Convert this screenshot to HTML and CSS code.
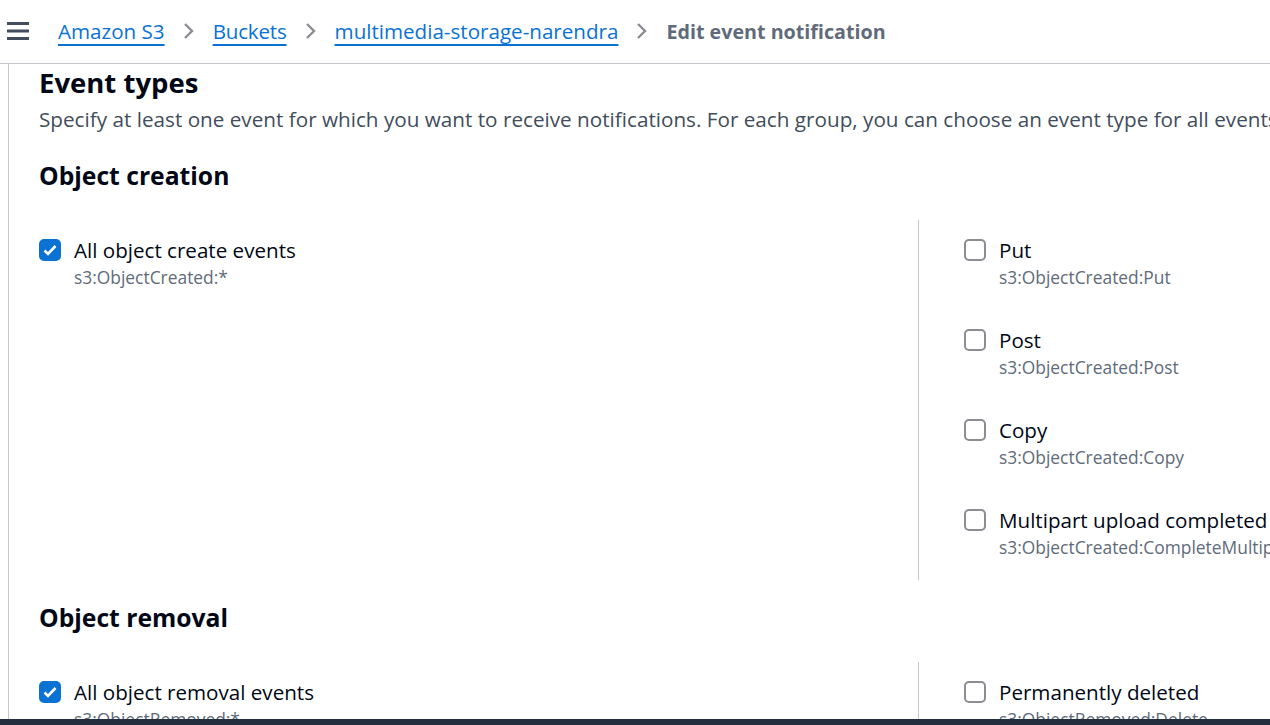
FILE: index.html
```html
<!DOCTYPE html>
<html>
<head>
<meta charset="utf-8">
<link rel="stylesheet" href="styles.css">
</head>
<body>
<header class="topbar">
  <button class="menu" aria-label="Menu">
    <svg width="22" height="18" viewBox="0 0 22 18"><path d="M0 1.5h22M0 9h22M0 16.5h22" stroke="#414d5c" stroke-width="3" stroke-linecap="butt"/></svg>
  </button>
  <nav class="crumbs">
    <a href="#" class="crumb">Amazon S3</a>
    <span class="chev"><svg width="14" height="20" viewBox="0 0 14 20"><path d="M3 3l7 7-7 7" fill="none" stroke="#8c8c94" stroke-width="2.4"/></svg></span>
    <a href="#" class="crumb">Buckets</a>
    <span class="chev"><svg width="14" height="20" viewBox="0 0 14 20"><path d="M3 3l7 7-7 7" fill="none" stroke="#8c8c94" stroke-width="2.4"/></svg></span>
    <a href="#" class="crumb">multimedia-storage-narendra</a>
    <span class="chev"><svg width="14" height="20" viewBox="0 0 14 20"><path d="M3 3l7 7-7 7" fill="none" stroke="#8c8c94" stroke-width="2.4"/></svg></span>
    <span class="current">Edit event notification</span>
  </nav>
</header>
<main class="main">
  <section class="panel">
    <h1 class="title">Event types</h1>
    <p class="desc">Specify at least one event for which you want to receive notifications. For each group, you can choose an event type for all events, or you can choose one or more individual events.</p>

    <h2 class="group-title">Object creation</h2>
    <div class="grid">
      <div class="col left">
        <label class="opt">
          <span class="box checked"><svg width="14" height="12" viewBox="0 0 14 12"><path d="M1.5 6.5l3.5 3.5 7.5-8" fill="none" stroke="#fff" stroke-width="2.6"/></svg></span>
          <span class="txt"><span class="lbl">All object create events</span><span class="sub">s3:ObjectCreated:*</span></span>
        </label>
      </div>
      <div class="col right">
        <label class="opt"><span class="box"></span><span class="txt"><span class="lbl">Put</span><span class="sub">s3:ObjectCreated:Put</span></span></label>
        <label class="opt"><span class="box"></span><span class="txt"><span class="lbl">Post</span><span class="sub">s3:ObjectCreated:Post</span></span></label>
        <label class="opt"><span class="box"></span><span class="txt"><span class="lbl">Copy</span><span class="sub">s3:ObjectCreated:Copy</span></span></label>
        <label class="opt"><span class="box"></span><span class="txt"><span class="lbl">Multipart upload completed</span><span class="sub">s3:ObjectCreated:CompleteMultipartUpload</span></span></label>
      </div>
    </div>

    <h2 class="group-title second">Object removal</h2>
    <div class="grid">
      <div class="col left">
        <label class="opt">
          <span class="box checked"><svg width="14" height="12" viewBox="0 0 14 12"><path d="M1.5 6.5l3.5 3.5 7.5-8" fill="none" stroke="#fff" stroke-width="2.6"/></svg></span>
          <span class="txt"><span class="lbl">All object removal events</span><span class="sub">s3:ObjectRemoved:*</span></span>
        </label>
      </div>
      <div class="col right">
        <label class="opt"><span class="box"></span><span class="txt"><span class="lbl">Permanently deleted</span><span class="sub">s3:ObjectRemoved:Delete</span></span></label>
        <label class="opt"><span class="box"></span><span class="txt"><span class="lbl">Delete marker created</span><span class="sub">s3:ObjectRemoved:DeleteMarkerCreated</span></span></label>
      </div>
    </div>
  </section>
</main>
<div class="bottombar"></div>
</body>
</html>
```
FILE: styles.css
```css
html, body {
  margin: 0;
  padding: 0;
  height: 725px;
  overflow: hidden;
  background: #fff;
  font-family: "Open Sans", "Noto Sans", Arial, sans-serif;
  color: #000716;
}
.topbar {
  box-sizing: border-box;
  height: 64px;
  border-bottom: 1px solid #c6c6cd;
  display: flex;
  align-items: center;
}
.menu {
  border: 0;
  background: none;
  padding: 0;
  margin-left: 7px;
  width: 22px;
  height: 18px;
  display: flex;
  margin-top: -1px;
}
.crumbs {
  display: flex;
  align-items: center;
  margin-left: 29px;
  margin-top: -1px;
  font-size: 20.6px;
  white-space: nowrap;
}
.crumb {
  color: #0972d3;
  text-decoration: underline;
  text-decoration-thickness: 2px;
  text-underline-offset: 5px;
}
.crumb:nth-of-type(2) {
  letter-spacing: -0.2px;
}
.chev {
  display: flex;
  margin: 0 17px 0 17px;
}
.current {
  color: #5f6b7a;
  font-weight: 700;
  font-size: 19.7px;
}
.main {
  margin-left: 8px;
  border-left: 1px solid #c6c6cd;
  height: 655px;
  overflow: hidden;
}
.panel {
  padding-left: 30px;
  width: 1500px;
}
.title {
  font-size: 27.5px;
  font-weight: 700;
  margin: 1px 0 0;
  line-height: 36px;
}
.desc {
  margin: 4px 0 0;
  font-size: 20.7px;
  line-height: 28px;
  color: #414d5c;
  white-space: nowrap;
}
.group-title {
  font-size: 24.7px;
  font-weight: 700;
  margin: 26px 0 0;
  line-height: 34px;
}
.group-title.second {
  margin-top: 21px;
}
.grid {
  display: grid;
  grid-template-columns: 879px 1fr;
  margin-top: 27px;
}
.col.left {
  padding-top: 16px;
}
.col.right {
  border-left: 1px solid #c6c6cd;
  padding: 16px 0 21px 45px;
  display: flex;
  flex-direction: column;
  gap: 37px;
}
.opt {
  display: flex;
  align-items: flex-start;
}
.box {
  box-sizing: border-box;
  width: 22px;
  height: 22px;
  border: 2.5px solid #8c8c94;
  border-radius: 5px;
  flex: none;
  margin-top: 3px;
  display: flex;
  align-items: center;
  justify-content: center;
}
.box.checked {
  background: #0972d3;
  border-color: #0972d3;
}
.txt {
  display: flex;
  flex-direction: column;
  margin-left: 13px;
}
.lbl {
  font-size: 20.6px;
  line-height: 28px;
}
.sub {
  font-size: 17.4px;
  line-height: 24px;
  margin-top: 1px;
  color: #5f6b7a;
}
.bottombar {
  position: fixed;
  left: 0;
  right: 0;
  bottom: 0;
  height: 6px;
  background: #232f3e;
}
```
